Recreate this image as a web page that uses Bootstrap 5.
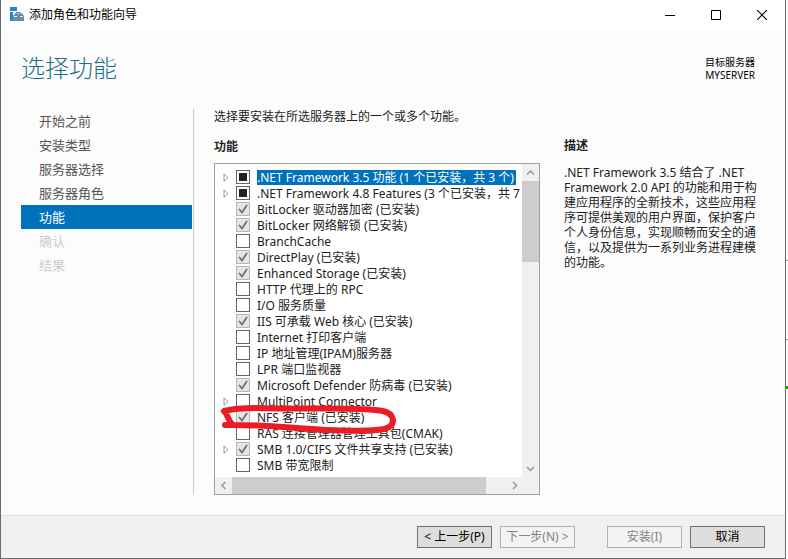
<!DOCTYPE html>
<html lang="zh-CN">
<head>
<meta charset="utf-8">
<meta name="viewport" content="width=device-width, initial-scale=1">
<title>添加角色和功能向导</title>
<link rel="stylesheet" href="https://cdn.jsdelivr.net/npm/bootstrap@5.3.0/dist/css/bootstrap.min.css">
<style>
body{font-family:"Noto Sans","Noto Sans CJK SC",sans-serif;font-size:12px;line-height:16px;color:#222;background:#fff}
.wizard{background:#fcfcfc;border:1px solid #6b6b6b;border-top:0;margin:0 2px 0 0;min-height:100vh}
.desktop-edge{position:absolute;right:0;width:2px;height:1px;background:#999}
.edge-upper{top:260px}
.edge-lower{top:339px}
.edge-green{top:386px;height:3px;background:#00b400}
.title-bar{height:30px;background:#fff;color:#000}
.title-bar .caption-btn{width:46px;height:30px;border:0;background:none;padding:0 0 2px}
.page-title{font-size:24px;line-height:32px;font-weight:300;color:#1a6e8e}
.page-head{height:79px;padding:22px 30px 0 20px}
.target{font-size:10px;line-height:13px;color:#000}
.steps{width:173px;border-right:1px solid #ccc;margin-left:20px}
.steps a{height:24px;line-height:24px;font-size:13px;padding-left:18px;margin-right:1px;color:#555;text-decoration:none;display:block}
.steps a.active{background:#0072bc;color:#fff}
.steps a.disabled{color:#ccc;pointer-events:none}
.main-col{margin-left:20px}
.intro{margin:0 0 14px}
.desc-col{width:198px;margin:29px 23px 0 24px}
.desc-text{line-height:15px;margin:11px 0 0}
.box-title{font-size:12px;line-height:16px;font-weight:700}
.tree-box{border:1px solid #a0a0a0;background:#fff}
.tree-view{padding:5px 0 4px 8px;min-width:0}
.tree-row{height:16px;white-space:nowrap}
.twist{width:7px;height:16px;border:0;padding:0;background:none;display:flex;align-items:center;flex:none}
.tick{appearance:none;flex:none;width:14px;height:14px;margin:0 7px 0 6px;border:1px solid #666;background:#fff;border-radius:0}
.tick:disabled{border-color:#b5b5b5;background:#e6e6e6 url("data:image/svg+xml,%3Csvg xmlns='http://www.w3.org/2000/svg' viewBox='0 0 12 12'%3E%3Cpath d='M2 6l3 3.5L10 2' fill='none' stroke='%23707070' stroke-width='1.8'/%3E%3C/svg%3E")}
.tick.partial{background:linear-gradient(#222,#222) center/8px 8px no-repeat #fff}
.tree-row label{line-height:15px}
.tree-row.selected label{background:#0072bc;color:#fff;padding-right:2px}
.bar-v{width:17px;background:#f0f0f0}
.bar-h{height:17px;background:#f0f0f0}
.scroll-btn{width:17px;height:17px;border:0;padding:0;background:none;display:flex;align-items:center;justify-content:center;flex:none}
.thumb-v{height:81px;background:#cdcdcd}
.thumb-h{width:254px;background:#cdcdcd}
.marker{position:absolute;left:5px;top:238px;width:180px;height:36px;pointer-events:none}
.foot{height:43px;background:#f0f0f0;border-top:1px solid #dcdcdc;padding:10px 20px 0 0;margin-top:20px}
.wiz-btn{width:75px;height:22px;line-height:18px;padding:0;border:1px solid #707070;background:#ddd;color:#000;font-size:12px;border-radius:0;white-space:nowrap}
.wiz-btn:disabled{border-color:#adb2b5;background:#f4f4f4;color:#838383}
</style>
<script src="https://cdn.jsdelivr.net/npm/bootstrap@5.3.0/dist/js/bootstrap.bundle.min.js"></script>
</head>
<body>
<div class="wizard d-flex flex-column">
  <header class="title-bar d-flex align-items-center">
    <svg class="ms-2 flex-shrink-0" width="16" height="16" viewBox="0 0 16 16" aria-hidden="true">
      <path d="M1 0h7v4H1zM1 5h3v9H1z" fill="#1e88d8"/>
      <path d="M7.500 7V5.500h4V7" fill="none" stroke="#6a8799"/>
      <path d="M4 9l2-2.500h7.500l1.500 2.500v5H4z" fill="#6f8c9e"/>
      <path d="M5 9.500h3m3 0h3" stroke="#fff"/>
    </svg>
    <span class="ms-1">添加角色和功能向导</span>
    <div class="ms-auto d-flex">
      <button class="caption-btn" aria-label="最小化"><svg width="10" height="10"><path d="M0 5.500h10" stroke="#000"/></svg></button>
      <button class="caption-btn" aria-label="最大化"><svg width="10" height="10"><path d="M.5.5h9v9h-9z" fill="none" stroke="#000"/></svg></button>
      <button class="caption-btn" aria-label="关闭"><svg width="10" height="10"><path d="M0 0l10 10M10 0L0 10" stroke="#000" stroke-width="1.100"/></svg></button>
    </div>
  </header>
  <div class="page-head d-flex justify-content-between">
    <h1 class="page-title m-0">选择功能</h1>
    <div class="target text-end"><div class="mt-1">目标服务器</div><div>MYSERVER</div></div>
  </div>
  <div class="d-flex flex-grow-1">
    <nav class="steps flex-shrink-0" aria-label="步骤">
      <a href="#">开始之前</a><a href="#">安装类型</a><a href="#">服务器选择</a><a href="#">服务器角色</a>
      <a href="#" class="active" aria-current="step">功能</a>
      <a href="#" class="disabled">确认</a><a href="#" class="disabled">结果</a>
    </nav>
    <main class="main-col flex-grow-1 d-flex flex-column overflow-hidden">
      <p class="intro">选择要安装在所选服务器上的一个或多个功能。</p>
      <h2 class="box-title mb-2">功能</h2>
      <div class="tree-box position-relative flex-grow-1 d-flex flex-column">
        <div class="d-flex flex-grow-1">
          <div class="tree-view flex-grow-1 overflow-hidden" id="tree"></div>
          <div class="bar-v d-flex flex-column flex-shrink-0">
            <button class="scroll-btn" aria-label="向上"><svg width="9" height="9"><path d="M1 6.500L4.500 3 8 6.500" fill="none" stroke="#999" stroke-width="1.500"/></svg></button>
            <div class="thumb-v"></div>
            <button class="scroll-btn mt-auto" aria-label="向下"><svg width="9" height="9"><path d="M1 3l3.500 3.500L8 3" fill="none" stroke="#999" stroke-width="1.500"/></svg></button>
          </div>
        </div>
        <div class="bar-h d-flex">
          <button class="scroll-btn" aria-label="向左"><svg width="9" height="9"><path d="M6.500 1L3 4.500 6.500 8" fill="none" stroke="#999" stroke-width="1.500"/></svg></button>
          <div class="thumb-h"></div>
          <button class="scroll-btn ms-auto me-3" aria-label="向右"><svg width="9" height="9"><path d="M3 1l3.500 3.500L3 8" fill="none" stroke="#999" stroke-width="1.500"/></svg></button>
        </div>
        <svg class="marker overflow-visible" viewBox="220 402 180 36" aria-hidden="true"><path d="M232 424C228 421 228 414 224 411C232 409 240 408 258 408C300 410 360 406 383 411C395 414 395 423 389 427C382 432 350 431 325 430C290 428 260 424 225 425" fill="none" stroke="#ec1c24" stroke-width="6" stroke-linecap="round" stroke-linejoin="round"/></svg>
      </div>
    </main>
    <section class="desc-col flex-shrink-0">
      <h2 class="box-title m-0">描述</h2>
      <p class="desc-text">.NET Framework 3.5 结合了 .NET Framework 2.0 API 的功能和用于构建应用程序的全新技术，这些应用程序可提供美观的用户界面，保护客户个人身份信息，实现顺畅而安全的通信，以及提供为一系列业务进程建模的功能。</p>
    </section>
  </div>
  <footer class="foot d-flex justify-content-end">
    <button class="wiz-btn me-2">&lt; 上一步(P)</button>
    <button class="wiz-btn me-4" disabled>下一步(N) &gt;</button>
    <button class="wiz-btn ms-2 me-2" disabled>安装(I)</button>
    <button class="wiz-btn">取消</button>
  </footer>
</div>
<span class="desktop-edge edge-upper"></span><span class="desktop-edge edge-lower"></span><span class="desktop-edge edge-green"></span>
<script>
// state: p = partly installed, c = installed, o = not installed; "+" = expandable
const items = [
  ["p+", ".NET Framework 3.5 功能 (1 个已安装，共 3 个)"],
  ["p+", ".NET Framework 4.8 Features (3 个已安装，共 7 个)"],
  ["c", "BitLocker 驱动器加密 (已安装)"],
  ["c", "BitLocker 网络解锁 (已安装)"],
  ["o", "BranchCache"],
  ["c", "DirectPlay (已安装)"],
  ["c", "Enhanced Storage (已安装)"],
  ["o", "HTTP 代理上的 RPC"],
  ["o", "I/O 服务质量"],
  ["c", "IIS 可承载 Web 核心 (已安装)"],
  ["o", "Internet 打印客户端"],
  ["o", "IP 地址管理(IPAM)服务器"],
  ["o", "LPR 端口监视器"],
  ["c", "Microsoft Defender 防病毒 (已安装)"],
  ["o+", "MultiPoint Connector"],
  ["c", "NFS 客户端 (已安装)"],
  ["o", "RAS 连接管理器管理工具包(CMAK)"],
  ["c+", "SMB 1.0/CIFS 文件共享支持 (已安装)"],
  ["o", "SMB 带宽限制"]
];
const arrow = '<svg width="6" height="9"><path d="M1 .8L5 4.500 1 8.200z" fill="none" stroke="#999"/></svg>';
document.getElementById("tree").innerHTML = items.map(([s, t], i) =>
  `<div class="tree-row d-flex align-items-center${i ? "" : " selected"}">` +
  (s[1] ? `<button class="twist" aria-label="展开">${arrow}</button>` : '<span class="twist"></span>') +
  `<input type="checkbox" class="tick${s[0] === "p" ? " partial" : ""}" id="f${i}"${s[0] === "c" ? " checked disabled" : ""}>` +
  `<label for="f${i}">${t}</label></div>`).join("");
</script>
</body>
</html>
